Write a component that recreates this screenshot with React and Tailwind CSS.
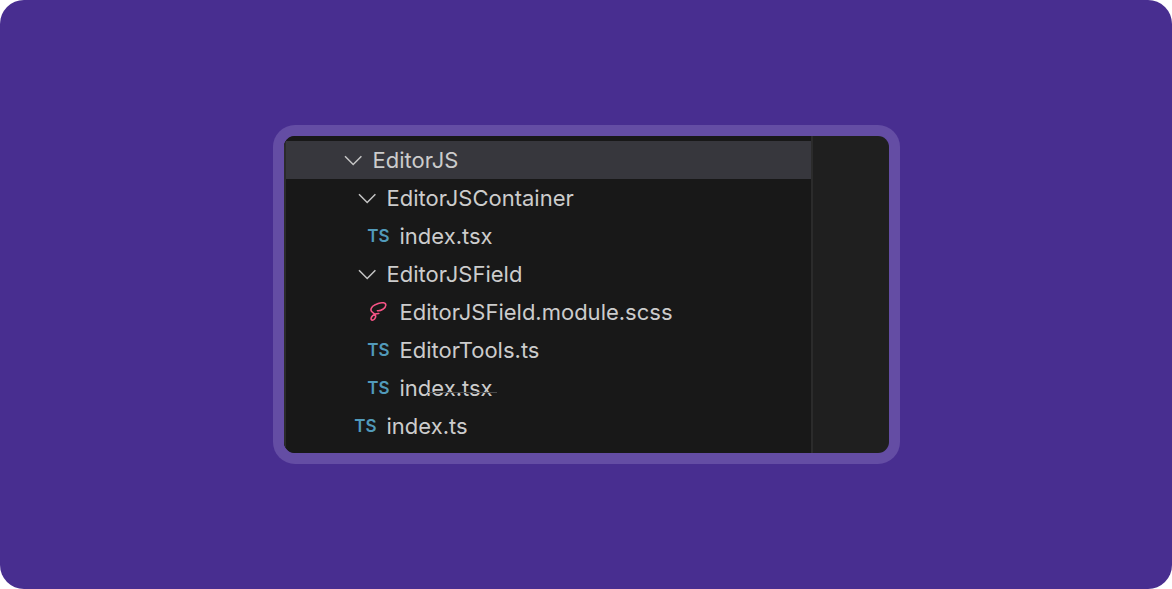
import React from "react";

const chevron = (
  <svg viewBox="0 0 22 22" className="h-[22px] w-[22px]" fill="none" stroke="#c5c5c5" strokeWidth="1.5">
    <path d="M4 7.2l8.2 8.3 8.2-8.3" />
  </svg>
);

const sass = (
  <svg
    viewBox="0 0 22 22"
    className="h-[22px] w-[22px]"
    fill="none"
    stroke="#f55385"
    strokeWidth="1.6"
    strokeLinecap="round"
    strokeLinejoin="round"
  >
    <path d="M9.4 9.7C13 10.1 17.6 7.4 17.8 4.2C17.9 1.7 14.2 1 10.2 2.4C6 3.8 2.8 6.6 2.9 9C3 11.8 7.4 12 7.7 15C7.8 17.2 5.8 19.3 4 19.1C2.4 18.8 2.9 16.4 4.7 14.7C6.3 13.2 8.6 12.4 10.8 12.5" />
  </svg>
);

const ts = <span className="text-[17px] font-semibold leading-none text-[#519aba]">TS</span>;

const icons = { folder: chevron, scss: sass, ts };

const indents = ["pl-[55px]", "pl-[69px]", "pl-[82px]"];

const entries = [
  { name: "EditorJS", type: "folder", depth: 0, active: true },
  { name: "EditorJSContainer", type: "folder", depth: 1 },
  { name: "index.tsx", type: "ts", depth: 2 },
  { name: "EditorJSField", type: "folder", depth: 1 },
  { name: "EditorJSField.module.scss", type: "scss", depth: 2 },
  { name: "EditorTools.ts", type: "ts", depth: 2 },
  { name: "index.tsx", type: "ts", depth: 2, marked: true },
  { name: "index.ts", type: "ts", depth: 1 },
];

function TreeRow({ name, type, depth, active = false, marked = false }) {
  return (
    <li>
      <button
        type="button"
        className={[
          "flex h-[38px] w-full items-center gap-[10px] text-left",
          indents[depth],
          active ? "bg-[#37373d]" : "hover:bg-white/5",
        ].join(" ")}
      >
        <span className="flex w-[22px] shrink-0 justify-center">{icons[type]}</span>
        <span className="relative">
          {name}
          {marked && (
            <span className="absolute -right-1 bottom-[11px] left-7 h-px bg-[#4a4a4a]" />
          )}
        </span>
      </button>
    </li>
  );
}

export default function App() {
  return (
    <main className="flex min-h-screen items-center justify-center rounded-3xl bg-[#482e90] font-['Inter',sans-serif]">
      <div className="w-full max-w-[627px] rounded-[22px] bg-[#644da4] p-[11px]">
        <div className="flex overflow-hidden rounded-[11px] bg-[#1f1f1f]">
          {/* file explorer */}
          <nav
            aria-label="Files"
            className="min-w-0 flex-1 border-x-2 border-[#2b2b2b] bg-[#181818] pt-[5px] pb-2"
          >
            <ul className="text-[22px] leading-8 text-[#cccccc]">
              {entries.map((entry, i) => (
                <TreeRow key={i} {...entry} />
              ))}
            </ul>
          </nav>

          {/* empty editor pane */}
          <div className="w-[76px] shrink-0" />
        </div>
      </div>
    </main>
  );
}
